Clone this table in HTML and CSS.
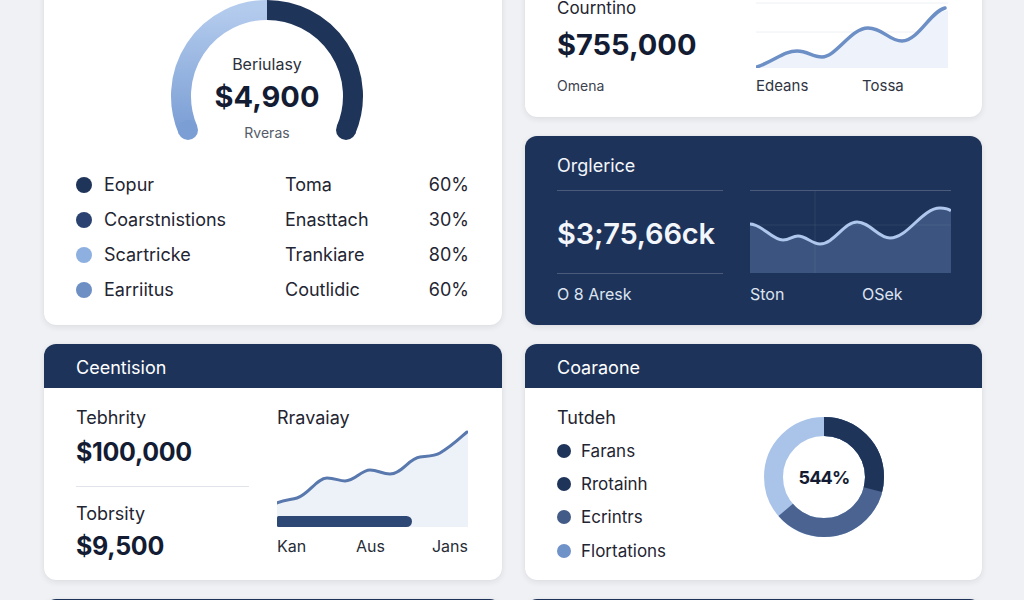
FILE: index.html
```html
<!DOCTYPE html>
<html lang="en">
<head>
<meta charset="utf-8">
<title>Dashboard</title>
<link rel="stylesheet" href="styles.css">
</head>
<body>
<main class="board">

  <section class="card card-gauge">
    <div class="gauge">
      <svg class="gauge-svg" width="200" height="150" viewBox="0 0 200 150">
        <defs>
          <linearGradient id="lightArc" x1="0" y1="0" x2="0" y2="1">
            <stop offset="0" stop-color="#b3cbed"/>
            <stop offset="1" stop-color="#7b9ed4"/>
          </linearGradient>
        </defs>
        <path d="M21 132 A86 86 0 0 1 100 12" fill="none" stroke="url(#lightArc)" stroke-width="20"/>
        <circle cx="21" cy="132" r="10" fill="#7b9ed4"/>
        <path d="M100 12 A86 86 0 0 1 179 132" fill="none" stroke="#1f3459" stroke-width="20"/>
        <circle cx="179" cy="132" r="10" fill="#1f3459"/>
      </svg>
      <div class="gauge-text">
        <span class="gauge-label">Beriulasy</span>
        <span class="gauge-value">$4,900</span>
        <span class="gauge-sub">Rveras</span>
      </div>
    </div>
    <div class="legend">
      <div class="legend-name"><i class="dot dot-a"></i>Eopur</div>
      <div class="legend-col">Toma</div>
      <div class="legend-pct">60%</div>
      <div class="legend-name"><i class="dot dot-b"></i>Coarstnistions</div>
      <div class="legend-col">Enasttach</div>
      <div class="legend-pct">30%</div>
      <div class="legend-name"><i class="dot dot-c"></i>Scartricke</div>
      <div class="legend-col">Trankiare</div>
      <div class="legend-pct">80%</div>
      <div class="legend-name"><i class="dot dot-d"></i>Earriitus</div>
      <div class="legend-col">Coutlidic</div>
      <div class="legend-pct">60%</div>
    </div>
  </section>

  <section class="card card-count">
    <div class="count-left">
      <div class="count-title">Courntino</div>
      <div class="count-value">$755,000</div>
      <div class="count-sub">Omena</div>
    </div>
    <div class="count-right">
      <svg class="count-chart" width="192" height="72" viewBox="0 0 192 72">
        <line x1="0" y1="7" x2="192" y2="7" stroke="#eef0f4" stroke-width="1"/>
        <line x1="0" y1="36" x2="192" y2="36" stroke="#eef0f4" stroke-width="1"/>
        <path d="M1 71 C20 64 28 55 41 55 C52 55 56 61 66 61 C80 61 95 32 112 32 C127 32 133 45 146 45 C162 45 175 15 189 15 L192 14 L192 72 L1 72 Z" fill="#eef3fb"/>
        <path d="M1 71 C20 64 28 55 41 55 C52 55 56 61 66 61 C80 61 95 32 112 32 C127 32 133 45 146 45 C162 45 175 15 189 12" fill="none" stroke="#6c8fc6" stroke-width="3.5" stroke-linecap="round"/>
      </svg>
      <div class="count-axis">
        <span>Edeans</span>
        <span>Tossa</span>
      </div>
    </div>
  </section>

  <section class="card card-dark">
    <div class="dark-title">Orglerice</div>
    <div class="dark-gap"></div>
    <div class="dark-value">$3;75,66ck</div>
    <div class="dark-chart">
      <svg width="201" height="82" viewBox="0 0 201 82">
        <path d="M0 33 C12 33 22 49 33 49 C40 49 42 45 48 45 C56 45 62 53 70 53 C84 53 94 31 107 31 C120 31 128 47 140 47 C158 47 172 17 190 17 C196 17 199 18 201 20 L201 82 L0 82 Z" fill="#3b5480"/>
        <line x1="65" y1="0" x2="65" y2="82" stroke="rgba(255,255,255,0.07)" stroke-width="1"/>
        <line x1="0" y1="34" x2="201" y2="34" stroke="rgba(255,255,255,0.07)" stroke-width="1"/>
        <path d="M0 33 C12 33 22 49 33 49 C40 49 42 45 48 45 C56 45 62 53 70 53 C84 53 94 31 107 31 C120 31 128 47 140 47 C158 47 172 17 190 17 C196 17 199 18 201 20" fill="none" stroke="#afc7ec" stroke-width="3"/>
      </svg>
    </div>
    <div class="dark-sub">O 8 Aresk</div>
    <div class="dark-axis">
      <span>Ston</span>
      <span>OSek</span>
    </div>
  </section>

  <section class="card card-panel">
    <header class="panel-head">Ceentision</header>
    <div class="panel-body split">
      <div class="stats">
        <div class="stat-label">Tebhrity</div>
        <div class="stat-value">$100,000</div>
        <div class="stat-divider"></div>
        <div class="stat-label">Tobrsity</div>
        <div class="stat-value">$9,500</div>
      </div>
      <div class="trend">
        <div class="stat-label">Rravaiay</div>
        <svg class="trend-chart" width="191" height="98" viewBox="0 0 191 98">
          <path d="M0 74 C8 70 14 71 20 69 C32 65 40 49 50 49 C58 49 62 52 68 52 C78 52 84 41 93 41 C101 41 105 45 113 45 C125 45 132 29 143 28 C152 27 158 27 163 24 C175 17 183 9 191 2 L191 98 L0 98 Z" fill="#edf1f8"/>
          <path d="M0 74 C8 70 14 71 20 69 C32 65 40 49 50 49 C58 49 62 52 68 52 C78 52 84 41 93 41 C101 41 105 45 113 45 C125 45 132 29 143 28 C152 27 158 27 163 24 C175 17 183 9 190 3" fill="none" stroke="#5878ae" stroke-width="3" stroke-linecap="round"/>
          <rect x="0" y="87" width="135" height="11" rx="5.5" fill="#2e4875"/>
          <rect x="0" y="87" width="10" height="11" rx="1.5" fill="#2e4875"/>
        </svg>
        <div class="trend-axis">
          <span>Kan</span>
          <span>Aus</span>
          <span>Jans</span>
        </div>
      </div>
    </div>
  </section>

  <section class="card card-panel">
    <header class="panel-head">Coaraone</header>
    <div class="panel-body donut-body">
      <div class="donut-list">
        <div class="stat-label">Tutdeh</div>
        <ul class="items">
          <li><i class="dot2 d1"></i>Farans</li>
          <li><i class="dot2 d2"></i>Rrotainh</li>
          <li><i class="dot2 d3"></i>Ecrintrs</li>
          <li><i class="dot2 d4"></i>Flortations</li>
        </ul>
      </div>
      <div class="donut">
        <svg width="122" height="122" viewBox="0 0 122 122">
          <g transform="rotate(-90 61 61)">
            <circle cx="61" cy="61" r="50.5" fill="none" stroke="#aac4e9" stroke-width="19"/>
            <circle cx="61" cy="61" r="50.5" fill="none" stroke="#4a6390" stroke-width="19" stroke-dasharray="201.8 400"/>
            <circle cx="61" cy="61" r="50.5" fill="none" stroke="#1f3459" stroke-width="19" stroke-dasharray="92.1 400"/>
          </g>
        </svg>
        <span class="donut-value">544%</span>
      </div>
    </div>
  </section>

  <section class="card card-panel">
    <header class="panel-head">&nbsp;</header>
  </section>
  <section class="card card-panel">
    <header class="panel-head">&nbsp;</header>
  </section>

</main>
</body>
</html>
```

FILE: styles.css
```css
* { box-sizing: border-box; }

html, body {
  margin: 0;
  padding: 0;
  background: #f0f1f4;
  overflow: hidden;
  font-family: Inter, "Noto Sans", "Liberation Sans", sans-serif;
  color: #232a37;
}

.board {
  display: grid;
  grid-template-columns: 458px 457px;
  grid-template-rows: 141px 189px 236px 60px;
  column-gap: 23px;
  row-gap: 19px;
  margin: -24px 0 0 44px;
}

.card {
  background: #ffffff;
  border-radius: 12px;
  box-shadow: 0 2px 6px rgba(20, 30, 50, 0.09), 0 0 1px rgba(20, 30, 50, 0.08);
  overflow: hidden;
}

/* ---------- gauge card ---------- */
.card-gauge {
  grid-row: 1 / 3;
  padding: 22px 33px 0 32px;
}

.gauge {
  display: grid;
  justify-items: center;
  padding-right: 11px;
}

.gauge-svg, .gauge-text { grid-area: 1 / 1; }
.gauge-svg { display: block; }

.gauge-text {
  display: flex;
  flex-direction: column;
  align-items: center;
  padding-top: 56px;
}

.gauge-label {
  font-size: 16px;
  line-height: 20px;
  color: #2b303b;
}

.gauge-value {
  margin-top: 6px;
  font-size: 29px;
  line-height: 34px;
  font-weight: 700;
  color: #131c33;
}

.gauge-sub {
  margin-top: 10px;
  font-size: 14px;
  line-height: 18px;
  color: #555b68;
}

.legend {
  margin-top: 19px;
  display: grid;
  grid-template-columns: 209px 1fr auto;
  grid-auto-rows: 35px;
  align-items: center;
  font-size: 18px;
  color: #1f2532;
}

.legend-name {
  display: flex;
  align-items: center;
  gap: 12px;
}

.legend-pct { text-align: right; }

.dot {
  width: 16px;
  height: 16px;
  border-radius: 50%;
  display: inline-block;
}
.dot-a { background: #1f3459; }
.dot-b { background: #2b4270; }
.dot-c { background: #8db0e0; }
.dot-d { background: #6e8fc4; }

/* ---------- count card ---------- */
.card-count {
  display: grid;
  grid-template-columns: 199px 1fr;
  padding: 21px 34px 20px 32px;
}

.count-title {
  font-size: 17px;
  line-height: 22px;
  color: #1f2532;
}

.count-value {
  margin-top: 8px;
  font-size: 29px;
  line-height: 36px;
  font-weight: 700;
  color: #131c33;
}

.count-sub {
  margin-top: 13px;
  font-size: 14px;
  line-height: 20px;
  color: #3c424e;
}

.count-chart { display: block; margin-top: -1px; }

.count-axis {
  margin-top: 8px;
  display: grid;
  grid-template-columns: 106px auto;
  font-size: 15px;
  line-height: 20px;
  color: #2f3542;
}

/* ---------- dark card ---------- */
.card-dark {
  background: #1e335a;
  color: #f3f6fb;
  display: grid;
  grid-template-columns: 166px 201px;
  grid-template-rows: 34px 84px auto;
  column-gap: 27px;
  padding: 20px 31px 21px 32px;
}

.dark-title {
  font-size: 18px;
  line-height: 20px;
}

.dark-value {
  display: flex;
  align-items: center;
  padding-top: 2px;
  border-top: 1px solid rgba(255, 255, 255, 0.2);
  border-bottom: 1px solid rgba(255, 255, 255, 0.2);
  font-size: 29px;
  font-weight: 600;
  letter-spacing: -0.2px;
}

.dark-chart {
  border-top: 1px solid rgba(255, 255, 255, 0.2);
}
.dark-chart svg { display: block; }

.dark-sub, .dark-axis {
  margin-top: 10px;
  font-size: 16px;
  line-height: 20px;
  color: #dde4f0;
}

.dark-axis {
  display: grid;
  grid-template-columns: 112px auto;
}

/* ---------- panels ---------- */
.panel-head {
  height: 44px;
  background: #1e335a;
  color: #ffffff;
  font-size: 18px;
  line-height: 48px;
  font-weight: 400;
  padding-left: 32px;
}

.panel-body {
  padding: 18px 34px 18px 32px;
}

.split {
  display: grid;
  grid-template-columns: 173px 191px;
  column-gap: 28px;
}

.stat-label {
  font-size: 18px;
  line-height: 24px;
  color: #1f2532;
}

.stat-value {
  margin-top: 5px;
  font-size: 25px;
  line-height: 34px;
  font-weight: 700;
  letter-spacing: -0.3px;
  color: #131c33;
}

.stat-divider {
  margin-top: 17px;
  border-top: 1px solid #e1e4ea;
}
.stat-divider + .stat-label { margin-top: 15px; }
.stat-divider + .stat-label + .stat-value { margin-top: 3px; }

.trend-chart {
  display: block;
  margin-top: -1px;
}

.trend-axis {
  margin-top: 9px;
  display: grid;
  grid-template-columns: 79px 1fr auto;
  font-size: 16px;
  line-height: 20px;
  color: #262c38;
}

.donut-body {
  display: grid;
  grid-template-columns: 206px 122px;
}

.items {
  list-style: none;
  margin: 4px 0 0;
  padding: 0;
}

.items li {
  height: 33.3px;
  display: flex;
  align-items: center;
  gap: 10px;
  font-size: 17px;
  color: #1f2532;
}

.dot2 {
  width: 14px;
  height: 14px;
  border-radius: 50%;
  display: inline-block;
}
.d1 { background: #1f3459; }
.d2 { background: #1f3459; }
.d3 { background: #435b87; }
.d4 { background: #6f92c8; }

.donut {
  margin-top: 10px;
  display: grid;
  place-items: center;
  width: 122px;
  height: 122px;
}
.donut svg, .donut-value { grid-area: 1 / 1; }
.donut svg { display: block; }

.donut-value {
  font-size: 18px;
  font-weight: 700;
  letter-spacing: -0.8px;
  color: #131c33;
}
```
